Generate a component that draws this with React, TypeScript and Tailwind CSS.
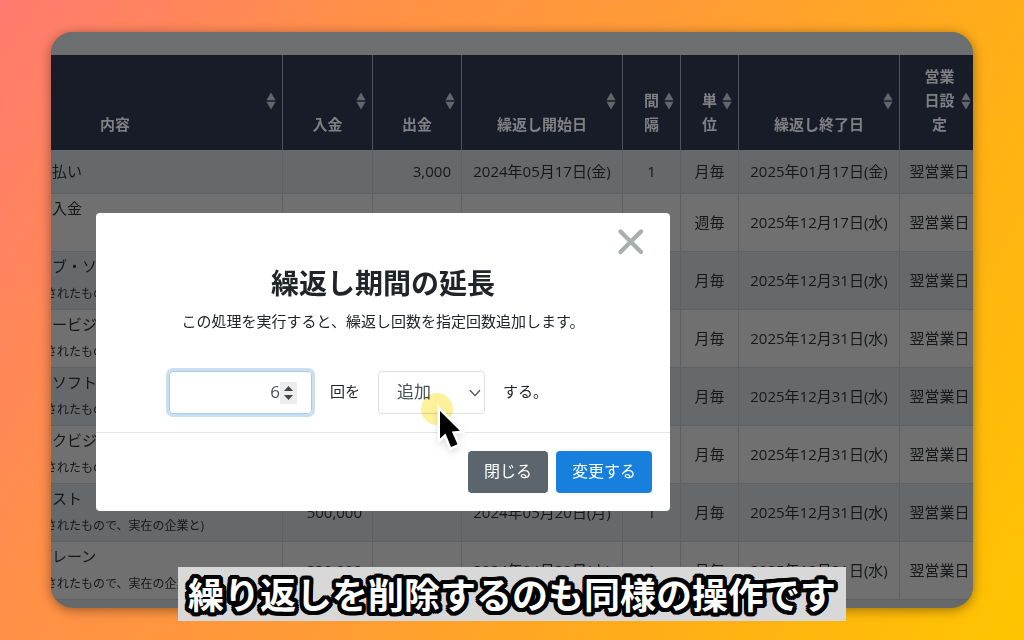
import React, { useState } from "react";

interface Row {
  name: string;
  note?: string;
  income?: string;
  expense?: string;
  start?: string;
  interval?: string;
  unit: string;
  end: string;
  holiday: string;
}

const NOTE = "されたもので、実在の企業と)";

const rows: Row[] = [
  { name: "支払い", expense: "3,000", start: "2024年05月17日(金)", interval: "1", unit: "月毎", end: "2025年01月17日(金)", holiday: "翌営業日" },
  { name: "ト入金", note: "", unit: "週毎", end: "2025年12月17日(水)", holiday: "翌営業日" },
  { name: "ェブ・ソ", note: NOTE, unit: "月毎", end: "2025年12月31日(水)", holiday: "翌営業日" },
  { name: "リービジ", note: NOTE, unit: "月毎", end: "2025年12月31日(水)", holiday: "翌営業日" },
  { name: "・ソフト", note: NOTE, unit: "月毎", end: "2025年12月31日(水)", holiday: "翌営業日" },
  { name: "ックビジ", note: NOTE, unit: "月毎", end: "2025年12月31日(水)", holiday: "翌営業日" },
  { name: "ャスト", note: NOTE, income: "500,000", start: "2024年05月20日(月)", interval: "1", unit: "月毎", end: "2025年12月31日(水)", holiday: "翌営業日" },
  { name: "ブレーン", note: NOTE, income: "330,000", start: "2024年04月30日(火)", interval: "1", unit: "月毎", end: "2025年12月31日(水)", holiday: "翌営業日" },
];

const headers = [
  { lines: ["内容"], className: "pr-[89px]" },
  { lines: ["入金"], className: "w-[90px] border-l" },
  { lines: ["出金"], className: "w-[89px] border-l" },
  { lines: ["繰返し開始日"], className: "w-[161px] border-l" },
  { lines: ["間", "隔"], className: "w-[58px] border-l" },
  { lines: ["単", "位"], className: "w-[58px] border-l" },
  { lines: ["繰返し終了日"], className: "w-[161px] border-l" },
  { lines: ["営業", "日設", "定"], className: "w-[80px] border-l" },
];

const SortIcon = ({ last }: { last: boolean }) => (
  <svg
    viewBox="0 0 10 18"
    className={`absolute top-[37px] h-[18px] w-[10px] fill-[#62656c] ${last ? "right-2" : "right-1.5"}`}
    aria-hidden="true"
  >
    <path d="M5 0.5 9.6 8.2H0.4Z" />
    <path d="M5 17.5 9.6 9.8H0.4Z" />
  </svg>
);

const ScheduleTable = () => (
  <table className="-ml-[14px] w-[calc(100%+20px)] table-fixed border-separate border-spacing-0 text-[15px] leading-6 text-[#151719]">
    <thead>
      <tr className="bg-[#181c29] text-[#7e8084]">
        {headers.map((h, i) => (
          <th
            key={h.lines.join("")}
            className={`relative h-[95px] border-[#4f525a] pt-2 pb-3.5 text-center align-bottom font-bold ${h.className}`}
          >
            {h.lines.map((line) => (
              <span key={line} className="block">{line}</span>
            ))}
            <SortIcon last={i === headers.length - 1} />
          </th>
        ))}
      </tr>
    </thead>
    <tbody className="[&_td]:border-b [&_td]:border-[#5e6163] [&_td]:whitespace-nowrap [&_td]:pb-0.5 [&_td+td]:border-l">
      {rows.map((row, i) => (
        <tr key={i} className={i % 2 === 0 ? "bg-[#66696b]" : "bg-[#707070]"}>
          {row.note === undefined ? (
            <td className="h-11">{row.name}</td>
          ) : (
            <td className="h-[58px] overflow-hidden pt-0.5 align-top">
              <div>{row.name}</div>
              <div className="pt-1 pl-2 text-xs leading-6">{row.note}</div>
            </td>
          )}
          <td className="pr-2.5 text-right">{row.income}</td>
          <td className="pr-2.5 text-right">{row.expense}</td>
          <td className="text-center">{row.start}</td>
          <td className="text-center">{row.interval}</td>
          <td className="text-center">{row.unit}</td>
          <td className="text-center">{row.end}</td>
          <td className="text-center">{row.holiday}</td>
        </tr>
      ))}
    </tbody>
  </table>
);

const ExtendModal = () => {
  const [count, setCount] = useState(6);

  return (
    <div
      role="dialog"
      aria-labelledby="extend-title"
      className="relative w-[574px] max-w-full rounded bg-white text-[15px] leading-6 text-[#212529]"
    >
      <button type="button" aria-label="閉じる" className="absolute top-[15px] right-[25px]">
        <svg viewBox="0 0 28 28" className="h-7 w-7" fill="none" stroke="#a9afad" strokeWidth="4.4" strokeLinecap="round">
          <path d="M3.5 3.5 24 24M24 3.5 3.5 24" />
        </svg>
      </button>

      <div className="pt-13 pb-[18px]">
        <h2 id="extend-title" className="text-center text-[28px] leading-9 font-bold">繰返し期間の延長</h2>
        <p className="mt-2 text-center">この処理を実行すると、繰返し回数を指定回数追加します。</p>

        <div className="mt-[38px] flex items-center gap-[18px] pl-[73px]">
          <div className="flex h-[43px] w-[143px] items-center rounded border border-[#a9cbe8] pr-3.5 ring-3 ring-[#c9dff1]">
            <input
              type="text"
              inputMode="numeric"
              aria-label="回数"
              value={count}
              onChange={(e) => setCount(Number(e.target.value) || 0)}
              className="min-w-0 flex-1 pb-0.5 text-right text-[17px] text-[#495057] outline-none"
            />
            <span className="flex h-[22px] w-[17px] flex-col items-center justify-center gap-1 bg-[#ededed]">
              <button type="button" aria-label="増やす" onClick={() => setCount(count + 1)}>
                <svg viewBox="0 0 9 5" className="h-[5px] w-[9px] fill-[#444]"><path d="M4.5 0 9 5H0Z" /></svg>
              </button>
              <button type="button" aria-label="減らす" onClick={() => setCount(count - 1)}>
                <svg viewBox="0 0 9 5" className="h-[5px] w-[9px] fill-[#444]"><path d="M4.5 5 9 0H0Z" /></svg>
              </button>
            </span>
          </div>
          <span className="pb-1">回を</span>
          <div className="relative">
            <select
              aria-label="操作"
              className="h-[43px] w-[107px] appearance-none rounded border border-[#dcdfe1] bg-white pb-0.5 pl-[18px] text-[17px] text-[#495057]"
            >
              <option>追加</option>
              <option>削除</option>
            </select>
            <svg
              viewBox="0 0 12 8"
              className="pointer-events-none absolute top-[18px] right-1 h-2 w-3"
              fill="none"
              stroke="#4b4f53"
              strokeWidth="1.3"
            >
              <path d="M1 1.2 6 6.6 11 1.2" />
            </svg>
          </div>
          <span className="pb-1">する。</span>
        </div>
      </div>

      <div className="flex justify-end gap-2 border-t border-[#e3e6e8] p-[18px] text-base text-white">
        <button type="button" className="h-[42px] rounded bg-[#5b656d] px-4 pb-0.5">閉じる</button>
        <button type="button" className="h-[42px] rounded bg-[#187fdc] px-4 pb-0.5">変更する</button>
      </div>
    </div>
  );
};

const Pointer = () => (
  <div className="pointer-events-none absolute top-[393px] left-[421px]">
    <div className="h-8 w-8 rounded-full bg-[#fdf19c] mix-blend-multiply" />
    <svg viewBox="0 0 32 48" className="absolute top-[11px] left-3 h-12 w-8 drop-shadow-md">
      <path
        d="M7 7V34.5L12.5 29.5 18 43 24.5 40.2 18.8 27.5 26.8 26.8Z"
        fill="#000"
        stroke="#fff"
        strokeWidth="5"
        strokeLinejoin="miter"
        paintOrder="stroke"
      />
    </svg>
  </div>
);

export default function App() {
  return (
    <main className="relative flex h-screen overflow-hidden bg-[linear-gradient(120deg,#ff7a70_0%,#ff9048_26%,#ff9c35_50%,#ffae18_73%,#ffc400_100%)] px-[51px] py-8 font-['Open_Sans','Noto_Sans_CJK_JP',sans-serif]">
      <div className="relative min-w-0 flex-1 overflow-hidden rounded-[22px] bg-[#66696b] shadow-[0_2px_12px_rgba(0,0,0,0.4)]">
        <div className="h-[23px] bg-[#6b6f70]" />
        <ScheduleTable />
        <div className="absolute inset-0 pt-[181px] pl-[45px]">
          <ExtendModal />
        </div>
      </div>

      <Pointer />

      <div className="absolute inset-x-0 bottom-[19px] flex justify-center">
        <p className="bg-[#d8d8d8] px-2.5 pt-1 text-4xl leading-[50px] font-bold whitespace-nowrap text-white [text-shadow:4px_0_#000,-4px_0_#000,0_4px_#000,0_-4px_#000,3px_3px_#000,-3px_3px_#000,3px_-3px_#000,-3px_-3px_#000,4px_2px_#000,-4px_2px_#000,4px_-2px_#000,-4px_-2px_#000,2px_4px_#000,-2px_4px_#000,2px_-4px_#000,-2px_-4px_#000,2px_0_#000,-2px_0_#000,0_2px_#000,0_-2px_#000]">
          繰り返しを削除するのも同様の操作です
        </p>
      </div>
    </main>
  );
}
